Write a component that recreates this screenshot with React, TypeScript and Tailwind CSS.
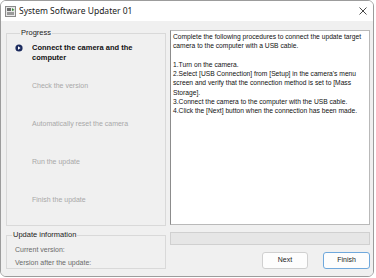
import React from "react";

const steps = [
  { label: "Connect the camera and the computer", active: true },
  { label: "Check the version", active: false },
  { label: "Automatically reset the camera", active: false },
  { label: "Run the update", active: false },
  { label: "Finish the update", active: false },
];

function Bullet() {
  return (
    <svg width="8" height="8" viewBox="0 0 8 8">
      <circle cx="4" cy="4" r="3.6" fill="#1c2b5e" />
      <path d="M3 2.2 L5.6 4 L3 5.8 Z" fill="#ffffff" />
    </svg>
  );
}

function AppIcon() {
  return (
    <svg width="11" height="11" viewBox="0 0 11 11">
      <rect x="0.5" y="0.5" width="10" height="10" fill="#e8e8e8" stroke="#8a8a8a" />
      <rect x="2" y="2" width="4" height="3" fill="#6b6b6b" />
      <rect x="2" y="6" width="7" height="3" fill="#9a9a9a" />
      <path d="M7 2 L9.5 4 L7 5 Z" fill="#3a8a3a" />
    </svg>
  );
}

export default function App() {
  const body = { fontFamily: '"Liberation Sans", Arial, sans-serif' };
  return (
    <div className="w-[376px] h-[278px] bg-white">
      <div className="w-[374px] h-[277px] border border-[#9c9c9c] rounded-[6px] overflow-hidden flex flex-col">
        {/* title bar */}
        <div
          className="h-[20px] bg-white flex items-center pl-[4px] pr-[4px] text-[8.5px] text-[#1a1a1a]"
          style={{ fontFamily: '"Noto Sans", sans-serif' }}
        >
          <AppIcon />
          <span className="ml-[3px]">System Software Updater 01</span>
          <svg className="ml-auto mr-[2px]" width="8" height="8" viewBox="0 0 8 8">
            <path d="M0.5 0.5 L7.5 7.5 M7.5 0.5 L0.5 7.5" stroke="#333" strokeWidth="0.9" />
          </svg>
        </div>

        {/* body */}
        <div className="flex-1 bg-[#f0f0f0] flex pl-[5px] pr-[3px] gap-[4px]" style={body}>
          {/* left column */}
          <div className="w-[160px] flex flex-col">
            <fieldset className="mt-[7px] h-[198px] border border-[#d9d9d9] px-[8px]">
              <legend className="ml-[5px] px-[1px] text-[7.5px] leading-[10px] text-[#222]">Progress</legend>
              <div className="pt-[5px] flex flex-col">
                {steps.map((s) => (
                  <div key={s.label} className="h-[38px] flex items-start">
                    <div className="w-[17px] pt-[1px]">{s.active && <Bullet />}</div>
                    {s.active ? (
                      <span className="w-[110px] text-[7.5px] leading-[10px] font-bold text-[#111]">
                        {s.label}
                      </span>
                    ) : (
                      <span className="text-[7px] leading-[10px] text-[#a8a8a8]">{s.label}</span>
                    )}
                  </div>
                ))}
              </div>
            </fieldset>
            <fieldset className="mt-[4px] h-[39px] border border-[#d9d9d9] px-[8px]">
              <legend className="-ml-[3px] px-[1px] text-[7.5px] leading-[10px] text-[#222]">
                Update information
              </legend>
              <div className="pt-[3px] flex flex-col text-[7px] leading-[13px] text-[#6a6a6a]">
                <span>Current version:</span>
                <span>Version after the update:</span>
              </div>
            </fieldset>
          </div>

          {/* right column */}
          <div className="flex-1 flex flex-col">
            <div className="mt-[9px] h-[195px] bg-white border border-[#b9b9b9] border-l-[#8c8c8c] px-[2px] pt-[1px] text-[6.7px] leading-[9.3px] text-[#111]">
              <p>Complete the following procedures to connect the update target camera to the computer with a USB cable.</p>
              <p className="mt-[9.3px]">1.Turn on the camera.</p>
              <p>2.Select [USB Connection] from [Setup] in the camera's menu screen and verify that the connection method is set to [Mass Storage].</p>
              <p>3.Connect the camera to the computer with the USB cable.</p>
              <p>4.Click the [Next] button when the connection has been made.</p>
            </div>
            <div className="mt-[7px] h-[13px] bg-[#e6e6e6] border border-[#d0d0d0]" />
            <div className="mt-[7px] flex justify-end gap-[15px]">
              <button className="w-[46px] h-[17px] bg-[#fdfdfd] border border-[#d0d0d0] rounded-[3px] text-[7px] text-[#222]">
                Next
              </button>
              <button className="w-[47px] h-[17px] bg-[#fdfdfd] border border-[#6fa8dc] rounded-[3px] text-[7px] text-[#222]">
                Finish
              </button>
            </div>
          </div>
        </div>
      </div>
    </div>
  );
}
